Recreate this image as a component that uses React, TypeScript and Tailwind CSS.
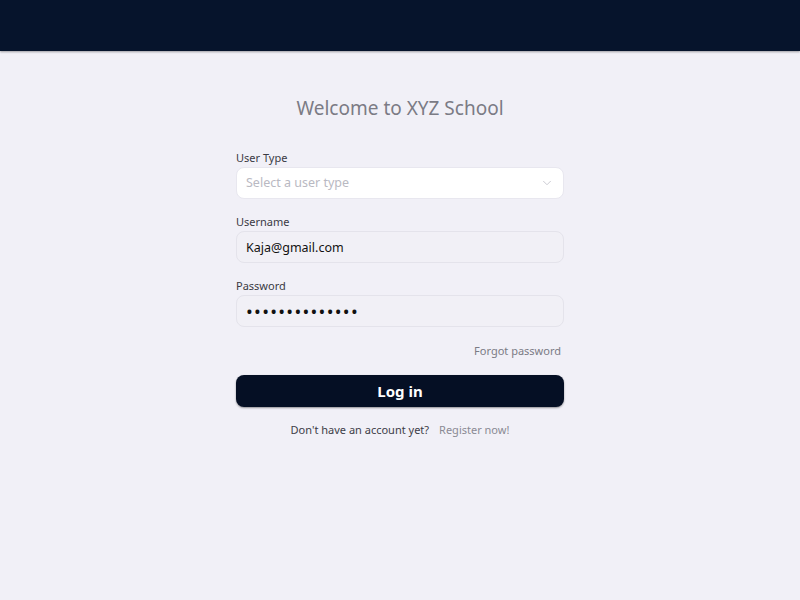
import React from "react";
import { ChevronDown } from "lucide-react";

export default function App() {
  return (
    <div
      className="min-h-[600px] w-full bg-[#f1f0f7] flex flex-col"
      style={{ fontFamily: '"Noto Sans", "Open Sans", sans-serif' }}
    >
      <header className="h-[51px] bg-[#06142c] shadow-[0_1px_2px_rgba(0,0,0,0.35)]" />
      <main className="flex justify-center pt-[43px]">
        <form className="w-[328px] flex flex-col" onSubmit={(e) => e.preventDefault()}>
          <h1 className="text-center text-[19px] leading-[28px] text-[#7b7b85] mb-[29px]">
            Welcome to XYZ School
          </h1>

          <label className="text-[11px] leading-[14px] text-[#3a3a44] mb-[2px]">User Type</label>
          <button
            type="button"
            className="h-[32px] flex items-center justify-between px-[9px] bg-white rounded-lg border border-[#e8e7ef] text-[12.5px] text-[#b9b9c2]"
          >
            Select a user type
            <ChevronDown className="w-[14px] h-[14px] text-[#c4c4cc]" strokeWidth={1.5} />
          </button>

          <label className="mt-[16px] text-[11px] leading-[14px] text-[#3a3a44] mb-[2px]">Username</label>
          <input
            defaultValue="Kaja@gmail.com"
            className="h-[32px] px-[9px] bg-[#f1f0f6] rounded-lg border border-[#e4e3eb] text-[12.5px] text-[#111] outline-none"
          />

          <label className="mt-[16px] text-[11px] leading-[14px] text-[#3a3a44] mb-[2px]">Password</label>
          <input
            type="password"
            defaultValue="kajapassword12"
            className="h-[32px] px-[9px] bg-[#f1f0f6] rounded-lg border border-[#e4e3eb] text-[18px] text-[#111] tracking-[1.3px] outline-none"
          />

          <div className="flex justify-end mt-[17px] pr-[3px]">
            <a className="text-[11px] leading-[14px] text-[#7b7b85]">Forgot password</a>
          </div>

          <button
            type="submit"
            className="mt-[17px] h-[32px] rounded-lg bg-[#050f24] text-white text-[15px] font-bold shadow-[0_1px_2px_rgba(0,0,0,0.4)]"
          >
            Log in
          </button>

          <p className="mt-[16px] text-center text-[11px] leading-[14px] text-[#3d3d47]">
            Don't have an account yet?
            <a className="ml-[10px] text-[#8a8a94]">Register now!</a>
          </p>
        </form>
      </main>
    </div>
  );
}
